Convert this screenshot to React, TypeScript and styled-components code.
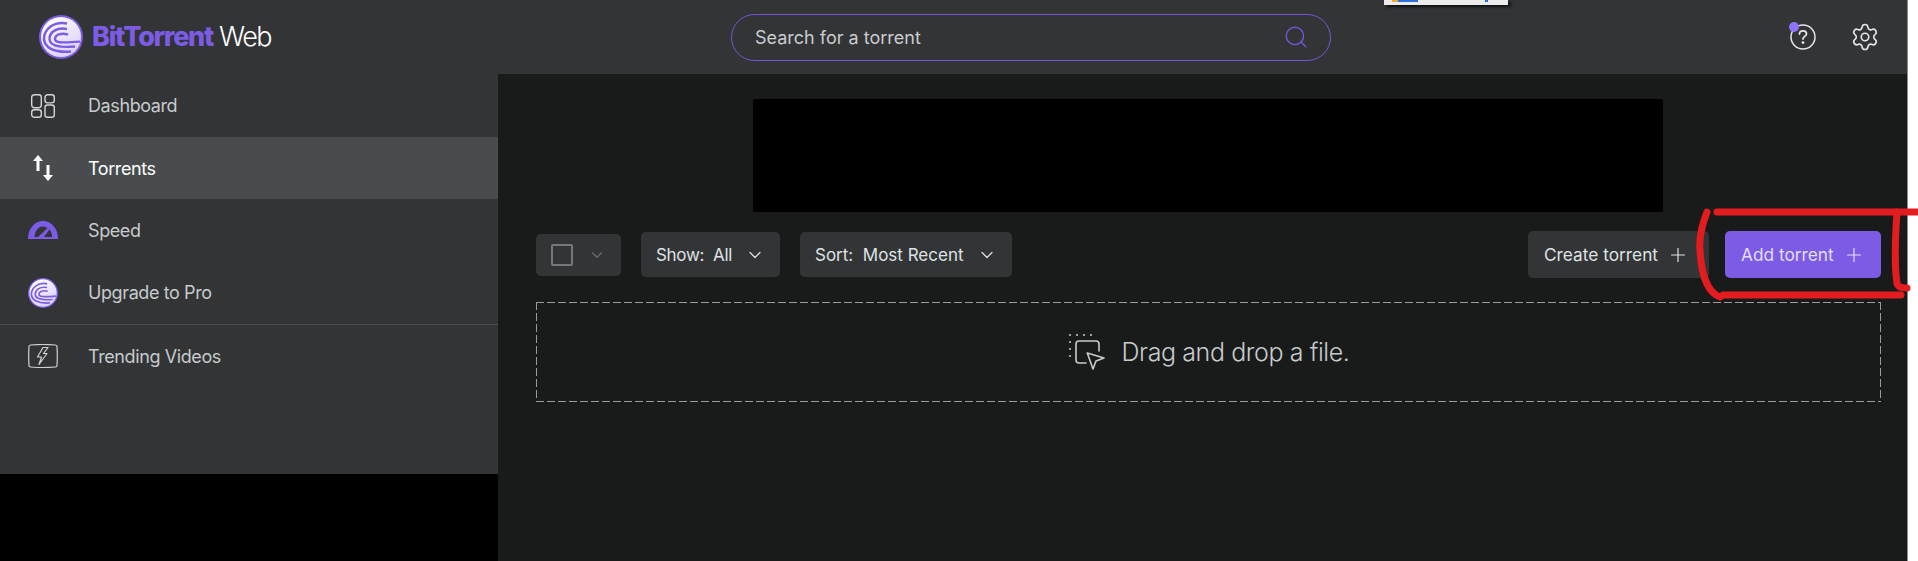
import React from 'react';
import styled, { createGlobalStyle } from 'styled-components';
import { ChevronDown, Plus, Search, Settings } from 'lucide-react';

const Global = createGlobalStyle`
  html, body { margin: 0; padding: 0; background: #ffffff; }
  body { font-family: "Inter", "Liberation Sans", sans-serif; overflow: hidden; }
`;

const Page = styled.div`
  position: relative;
  width: 1907px;
  height: 561px;
  display: flex;
  flex-direction: column;
  background: #191b1b;
  border-right: 1px solid #8a8a8a;
`;

const Header = styled.header`
  height: 74px;
  flex: none;
  background: #323436;
  display: grid;
  grid-template-columns: 731px 600px 1fr;
  align-items: center;
`;

const Brand = styled.div`
  display: flex;
  align-items: center;
  padding-left: 39px;
  gap: 9px;
`;

const BrandName = styled.span`
  font-size: 27px;
  font-weight: 800;
  letter-spacing: -1.25px;
  color: #7c5ce4;
  line-height: 32px;
`;

const BrandSuffix = styled.span`
  font-weight: 300;
  color: #ffffff;
  margin-left: 6px;
  letter-spacing: -1.6px;
`;

const SearchBox = styled.div`
  height: 47px;
  box-sizing: border-box;
  border: 1px solid #7456d6;
  border-radius: 24px;
  display: flex;
  align-items: center;
  justify-content: space-between;
  padding: 0 21px 0 23px;
  color: #c9cdcf;
  font-size: 18px;
`;

const HeaderActions = styled.div`
  display: flex;
  justify-content: flex-end;
  align-items: center;
  gap: 34px;
  padding-right: 27px;
  color: #e6e6e6;
`;

const HelpWrap = styled.div`
  position: relative;
  width: 26px;
  height: 26px;
`;

const HelpDot = styled.span`
  position: absolute;
  left: -1px;
  top: -2px;
  width: 10px;
  height: 10px;
  border-radius: 50%;
  background: #8f73f5;
`;

const Body = styled.div`
  flex: 1;
  display: flex;
  min-height: 0;
`;

const SideColumn = styled.aside`
  width: 498px;
  flex: none;
  display: flex;
  flex-direction: column;
  background: #000000;
`;

const Nav = styled.nav`
  height: 400px;
  background: #323436;
  display: flex;
  flex-direction: column;
`;

const NavRow = styled.div<{ $active?: boolean; $divided?: boolean; $h: number }>`
  height: ${p => p.$h}px;
  flex: none;
  box-sizing: border-box;
  display: flex;
  align-items: center;
  padding-left: 28px;
  gap: 30px;
  background: ${p => (p.$active ? '#484c4f' : 'transparent')};
  color: ${p => (p.$active ? '#ffffff' : '#c6cbcc')};
  border-bottom: ${p => (p.$divided ? '1px solid #4a4c4e' : 'none')};
  font-size: 18px;
  letter-spacing: -0.4px;
`;

const NavIcon = styled.div`
  width: 30px;
  flex: none;
  display: flex;
  justify-content: center;
`;

const Main = styled.main`
  flex: 1;
  padding: 25px 26px 0 38px;
  min-width: 0;
`;

const BannerRow = styled.div`
  display: flex;
  justify-content: center;
  padding-right: 1px;
`;

const Banner = styled.div`
  width: 910px;
  height: 113px;
  background: #000000;
`;

const Toolbar = styled.div`
  margin-top: 19px;
  height: 47px;
  display: flex;
  align-items: center;
  gap: 20px;
`;

const SelectAll = styled.div`
  width: 85px;
  height: 42px;
  box-sizing: border-box;
  padding-left: 15px;
  background: #323436;
  border-radius: 5px;
  display: flex;
  align-items: center;
  gap: 15px;
  color: #6c6e70;
`;

const Checkbox = styled.span`
  width: 22px;
  height: 22px;
  box-sizing: border-box;
  border: 2px solid #75787a;
  border-radius: 2px;
`;

const Dropdown = styled.div<{ $w: number; $tight?: boolean }>`
  width: ${p => p.$w}px;
  height: 45px;
  box-sizing: border-box;
  padding: 0 15px;
  background: #323436;
  border-radius: 5px;
  display: flex;
  align-items: center;
  justify-content: space-between;
  color: #dfe3e5;
  font-size: 17px;
  letter-spacing: ${p => (p.$tight ? '-0.3px' : '0')};
  white-space: pre;
`;

const Spacer = styled.div`
  flex: 1;
`;

const ActionButton = styled.div<{ $primary?: boolean; $w: number }>`
  width: ${p => p.$w}px;
  height: 47px;
  box-sizing: border-box;
  padding-left: 16px;
  background: ${p => (p.$primary ? '#7c5ce4' : '#323436')};
  color: ${p => (p.$primary ? '#e4defb' : '#dfe3e5')};
  border-radius: 5px;
  display: flex;
  align-items: center;
  gap: 9px;
  font-size: 17.3px;
`;

const Actions = styled.div`
  display: flex;
  gap: 16px;
`;

const DropZone = styled.div`
  margin-top: 24px;
  height: 100px;
  box-sizing: border-box;
  padding-left: 2px;
  background:
    linear-gradient(to right, #9a9c9e 8px, transparent 8px) left top / 11px 1px repeat-x,
    linear-gradient(to right, #9a9c9e 8px, transparent 8px) left bottom / 11px 1px repeat-x,
    linear-gradient(to bottom, #9a9c9e 8px, transparent 8px) left top / 1px 11px repeat-y,
    linear-gradient(to bottom, #9a9c9e 8px, transparent 8px) right top / 1px 11px repeat-y;
  display: flex;
  align-items: center;
  justify-content: center;
  gap: 16px;
  color: #c6cbcc;
  font-size: 25px;
  font-weight: 300;
  letter-spacing: -0.4px;
`;

const PopupSliver = styled.div`
  position: absolute;
  left: 1384px;
  top: 0;
  width: 124px;
  height: 5px;
  background: #ececec;
  box-shadow: 3px 2px 3px rgba(0, 0, 0, 0.7);
`;

const SliverMark = styled.span<{ $x: number; $w: number; $c: string }>`
  position: absolute;
  top: 0;
  left: ${p => p.$x}px;
  width: ${p => p.$w}px;
  height: 2px;
  background: ${p => p.$c};
`;

const Scribble = styled.svg`
  position: absolute;
  left: 1690px;
  top: 200px;
  overflow: visible;
`;

const LogoMark = ({ size }: { size: number }) => (
  <svg width={size} height={size} viewBox="0 0 44 44">
    <defs>
      <linearGradient id={`lg${size}`} x1="0.2" y1="0" x2="0.8" y2="1">
        <stop offset="0" stopColor="#ffffff" />
        <stop offset="1" stopColor="#d8cdf8" />
      </linearGradient>
    </defs>
    <circle cx="22" cy="22" r="22" fill="#7c5ce4" />
    <circle cx="22" cy="22" r="20" fill={`url(#lg${size})`} />
    <g fill="none" stroke="#7c5ce4">
      <path d="M28 8.5 C15 6 5 14 5 24 C5.5 32 14 38 32 36.5" strokeWidth="2.6" />
      <path d="M28 14 C18 12 10.5 17 10.5 24 C11 30 18 33 36 31.5" strokeWidth="2.4" />
      <path d="M29 19.5 C22 17.5 16 19.5 16 24 C16 27.5 21 28.2 41 26.6" strokeWidth="2.4" />
    </g>
  </svg>
);

const Dashboard = () => (
  <svg width="24" height="24" viewBox="0 0 24 24" fill="none" stroke="#d4d6d8" strokeWidth="1.4">
    <rect x="0.7" y="0.7" width="9.6" height="13" rx="2.6" />
    <rect x="14" y="0.7" width="9.3" height="8.2" rx="2.6" />
    <rect x="0.7" y="15.8" width="9.6" height="7.5" rx="2.6" />
    <rect x="14" y="11" width="9.3" height="12.3" rx="2.6" />
  </svg>
);

const Arrows = () => (
  <svg width="20" height="26" viewBox="0 0 20 26" fill="#ffffff">
    <path d="M5 0 L10 6 H6.5 V16 H3.5 V6 H0 Z" />
    <path d="M13.5 10 H16.5 V20 H20 L15 26 L10 20 H13.5 Z" />
  </svg>
);

const Gauge = () => (
  <svg width="30" height="18" viewBox="0 0 30 18">
    <path d="M0 18 C0 7 7 0 15 0 C23 0 30 7 30 18 Z" fill="#7c5ce4" />
    <path d="M6.5 16 L10 16 L19.5 7 C18 6 16.5 5.5 15 5.5 C10 5.5 7 10 6.5 16 Z" fill="#323436" />
    <path d="M16 16 L21.5 8.5 C23 10.5 24 13 24.2 16 Z" fill="#323436" />
  </svg>
);

const Bolt = () => (
  <svg width="30" height="24" viewBox="0 0 30 24" fill="none" stroke="#cfd2d4" strokeWidth="1.2">
    <path d="M2.5 1 C10 0.4 20 0.4 27.5 1 C28.6 1.1 29 1.6 29 2.6 C29.4 8.5 29.4 15.5 29 21.4 C29 22.4 28.6 22.9 27.5 23 C20 23.6 10 23.6 2.5 23 C1.4 22.9 1 22.4 1 21.4 C0.6 15.5 0.6 8.5 1 2.6 C1 1.6 1.4 1.1 2.5 1 Z" />
    <path d="M15 3.5 L9.5 13 H13.5 L11 20.5 L19 9.5 H15.5 L20 3.5 Z" strokeLinejoin="round" />
  </svg>
);

const Help = () => (
  <svg width="26" height="26" viewBox="0 0 26 26" fill="none" stroke="#e6e6e6" strokeWidth="1.5" strokeLinecap="round">
    <circle cx="13" cy="13" r="12" />
    <path d="M9.5 10 C9.5 7.8 11 6.8 13 6.8 C15 6.8 16.5 8 16.5 9.8 C16.5 12.4 13 12.4 13 15" strokeWidth="1.8" />
    <circle cx="13" cy="18.6" r="0.7" fill="#e6e6e6" />
  </svg>
);

const DropIcon = () => (
  <svg width="36" height="36" viewBox="0 0 36 36" fill="none" stroke="#c9ccce" strokeWidth="1.6" strokeLinejoin="round" strokeLinecap="round">
    <path d="M17 29 H10 Q7 29 7 26 V10 Q7 7 10 7 H27 Q30 7 30 10 V17" />
    <path d="M18.3 19 L35 24 L27 27 L24 35 Z" />
    <g fill="#c9ccce" stroke="none">
      <circle cx="1" cy="1" r="1" /><circle cx="8" cy="1" r="1" /><circle cx="15" cy="1" r="1" /><circle cx="22" cy="1" r="1" />
      <circle cx="1" cy="8" r="1" /><circle cx="1" cy="15" r="1" /><circle cx="1" cy="22" r="1" />
    </g>
  </svg>
);

export default function App() {
  return (
    <>
      <Global />
      <Page>
        <Header>
          <Brand>
            <LogoMark size={44} />
            <BrandName>BitTorrent<BrandSuffix>Web</BrandSuffix></BrandName>
          </Brand>
          <SearchBox>
            Search for a torrent
            <Search size={26} color="#7456d6" strokeWidth={1.3} />
          </SearchBox>
          <HeaderActions>
            <HelpWrap><Help /><HelpDot /></HelpWrap>
            <Settings size={30} strokeWidth={1.3} />
          </HeaderActions>
        </Header>
        <Body>
          <SideColumn>
            <Nav>
              <NavRow $h={63}><NavIcon><Dashboard /></NavIcon>Dashboard</NavRow>
              <NavRow $h={62} $active><NavIcon><Arrows /></NavIcon>Torrents</NavRow>
              <NavRow $h={62}><NavIcon><Gauge /></NavIcon>Speed</NavRow>
              <NavRow $h={64} $divided><NavIcon><LogoMark size={30} /></NavIcon>Upgrade to Pro</NavRow>
              <NavRow $h={62}><NavIcon><Bolt /></NavIcon>Trending Videos</NavRow>
            </Nav>
          </SideColumn>
          <Main>
            <BannerRow><Banner /></BannerRow>
            <Toolbar>
              <SelectAll><Checkbox /><ChevronDown size={18} strokeWidth={1.5} /></SelectAll>
              <Dropdown $w={139} $tight>Show:  All<ChevronDown size={20} strokeWidth={1.5} /></Dropdown>
              <Dropdown $w={212}>Sort:  Most Recent<ChevronDown size={20} strokeWidth={1.5} /></Dropdown>
              <Spacer />
              <Actions>
                <ActionButton $w={181}>Create torrent<Plus size={22} strokeWidth={1.3} /></ActionButton>
                <ActionButton $w={156} $primary>Add torrent<Plus size={22} strokeWidth={1.3} /></ActionButton>
              </Actions>
            </Toolbar>
            <DropZone><DropIcon />Drag and drop a file.</DropZone>
          </Main>
        </Body>
        <PopupSliver>
          <SliverMark $x={8} $w={6} $c="#f0a63a" />
          <SliverMark $x={14} $w={20} $c="#2f6fd8" />
          <SliverMark $x={101} $w={3} $c="#2f6fd8" />
        </PopupSliver>
        <Scribble width="230" height="110" fill="none" stroke="#e31c1f" strokeWidth="7" strokeLinecap="round" strokeLinejoin="round">
          <path d="M17 12 C 12 25 9 40 10 50 C 11 70 16 92 30 97" />
          <path d="M27 12 H227" />
          <path d="M207 12 C 205 40 205 70 207 84 C 209 88 213 88 217 88" />
          <path d="M33 95 H211" />
        </Scribble>
      </Page>
    </>
  );
}
